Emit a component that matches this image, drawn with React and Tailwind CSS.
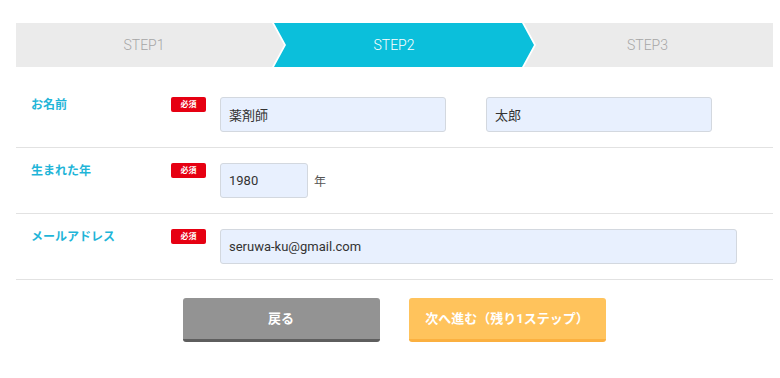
const jp = "font-['Roboto','Noto_Sans_CJK_JP',sans-serif]";

function Badge() {
  return (
    <span className="flex h-[15px] w-[35px] shrink-0 items-center justify-center rounded-[2px] bg-[#e60012] text-[8px] font-bold leading-none text-white">
      必須
    </span>
  );
}

function Field({ value, width }) {
  return (
    <input
      readOnly
      value={value}
      className={`h-[35px] ${width} rounded-[3px] border border-[#d3d8df] bg-[#e8f0fe] px-[8px] text-[13px] text-[#333] outline-none`}
    />
  );
}

function Row({ label, children }) {
  return (
    <div className="flex items-start border-b border-[#e2e2e2] py-[15px] pl-[15px]">
      <div className="w-[140px] shrink-0 text-[12px] font-bold leading-[16px] text-[#1fb5d8]">{label}</div>
      <Badge />
      <div className="ml-[14px] flex items-center">{children}</div>
    </div>
  );
}

export default function App() {
  return (
    <div className={`min-h-screen bg-white pt-[23px] ${jp}`}>
      <div className="ml-[16px] w-[757px]">
        {/* Steps */}
        <div className="flex h-[44px] bg-[#ebebeb] text-[14px] font-light">
          <div className="flex flex-1 items-center justify-center text-[#a6a6a6]">STEP1</div>
          <div className="h-full w-[264px] bg-white [clip-path:polygon(0_0,252px_0,264px_50%,252px_100%,0_100%,12px_50%)]">
            <div className="flex h-full items-center justify-center bg-[#0bbfdb] pr-[20px] text-white [clip-path:polygon(2px_0,250px_0,262px_50%,250px_100%,2px_100%,14px_50%)]">
              STEP2
            </div>
          </div>
          <div className="flex w-[237px] items-center justify-center pr-[14px] text-[#a6a6a6]">STEP3</div>
        </div>

        {/* Form */}
        <div className="mt-[15px]">
          <Row label="お名前">
            <Field value="薬剤師" width="w-[226px]" />
            <div className="w-[40px]" />
            <Field value="太郎" width="w-[226px]" />
          </Row>
          <Row label="生まれた年">
            <Field value="1980" width="w-[88px]" />
            <span className="ml-[6px] pt-[2px] text-[12px] text-[#555]">年</span>
          </Row>
          <Row label="メールアドレス">
            <Field value="seruwa-ku@gmail.com" width="w-[517px]" />
          </Row>
        </div>

        {/* Buttons */}
        <div className="mt-[18px] flex justify-center gap-[29px] pr-[1px]">
          <button className="h-[44px] w-[197px] rounded-[3px] border-b-[3px] border-[#5e5e5e] bg-[#939393] text-[13px] font-bold text-white">
            戻る
          </button>
          <button className="h-[44px] w-[197px] rounded-[3px] border-b-[3px] border-[#fbb040] bg-[#ffc35c] text-[13px] font-bold text-white">
            次へ進む（残り1ステップ）
          </button>
        </div>
      </div>
    </div>
  );
}
